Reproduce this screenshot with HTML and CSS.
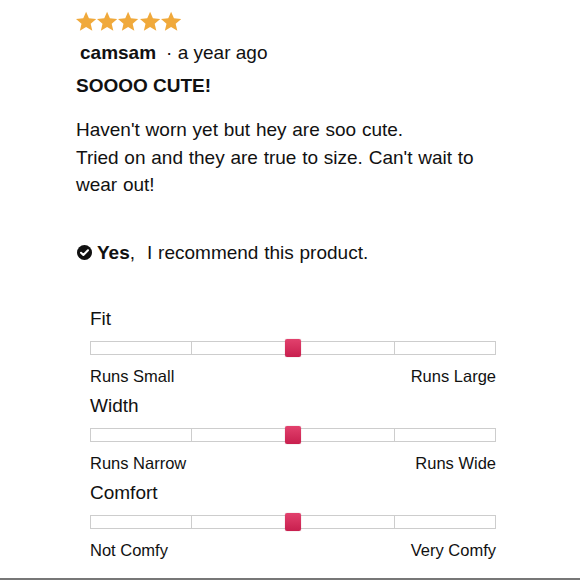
FILE: index.html
```
<!DOCTYPE html>
<html>
<head>
<meta charset="utf-8">
<link rel="stylesheet" href="styles.css">
</head>
<body>
<div class="review">
  <div class="stars">
    <svg class="star" viewBox="2 2 20 19"><path d="M12 17.27L18.18 21l-1.64-7.03L22 9.24l-7.19-.61L12 2 9.19 8.63 2 9.24l5.46 4.73L5.82 21z"/></svg>
    <svg class="star" viewBox="2 2 20 19"><path d="M12 17.27L18.18 21l-1.64-7.03L22 9.24l-7.19-.61L12 2 9.19 8.63 2 9.24l5.46 4.73L5.82 21z"/></svg>
    <svg class="star" viewBox="2 2 20 19"><path d="M12 17.27L18.18 21l-1.64-7.03L22 9.24l-7.19-.61L12 2 9.19 8.63 2 9.24l5.46 4.73L5.82 21z"/></svg>
    <svg class="star" viewBox="2 2 20 19"><path d="M12 17.27L18.18 21l-1.64-7.03L22 9.24l-7.19-.61L12 2 9.19 8.63 2 9.24l5.46 4.73L5.82 21z"/></svg>
    <svg class="star" viewBox="2 2 20 19"><path d="M12 17.27L18.18 21l-1.64-7.03L22 9.24l-7.19-.61L12 2 9.19 8.63 2 9.24l5.46 4.73L5.82 21z"/></svg>
  </div>
  <div class="meta"><span class="author">camsam</span><span class="date">· a year ago</span></div>
  <div class="title">SOOOO CUTE!</div>
  <p class="body">Haven't worn yet but hey are soo cute.<br>Tried on and they are true to size. Can't wait to wear out!</p>
  <div class="recommend">
    <svg class="check" viewBox="0 0 16 16"><circle cx="8" cy="8" r="8" fill="#111"/><path d="M4.3 8.3l2.5 2.4 4.9-5" fill="none" stroke="#fff" stroke-width="2.2" stroke-linecap="round" stroke-linejoin="round"/></svg>
    <span class="yes">Yes</span><span class="comma">,</span><span class="rec-text">I recommend this product.</span>
  </div>
  <div class="sliders">
    <div class="slider">
      <div class="slider-title">Fit</div>
      <div class="bar"><div class="seg"></div><div class="seg"></div><div class="seg"></div><div class="seg"></div><div class="thumb"></div></div>
      <div class="ends"><span>Runs Small</span><span>Runs Large</span></div>
    </div>
    <div class="slider">
      <div class="slider-title">Width</div>
      <div class="bar"><div class="seg"></div><div class="seg"></div><div class="seg"></div><div class="seg"></div><div class="thumb"></div></div>
      <div class="ends"><span>Runs Narrow</span><span>Runs Wide</span></div>
    </div>
    <div class="slider">
      <div class="slider-title">Comfort</div>
      <div class="bar"><div class="seg"></div><div class="seg"></div><div class="seg"></div><div class="seg"></div><div class="thumb"></div></div>
      <div class="ends"><span>Not Comfy</span><span>Very Comfy</span></div>
    </div>
  </div>
</div>
<div class="bottom-line"></div>
</body>
</html>
```
FILE: styles.css
```
html, body {
  margin: 0;
  padding: 0;
  background: #fff;
}
body {
  width: 580px;
  height: 580px;
  position: relative;
  overflow: hidden;
  font-family: "Liberation Sans", Arial, sans-serif;
  color: #111;
}
.review {
  padding: 11px 0 0 76px;
}
.stars {
  display: flex;
  gap: 1px;
  height: 21px;
}
.star {
  width: 20.2px;
  height: 20.5px;
  fill: #f0a93b;
}
.meta {
  margin-top: 10px;
  padding-left: 4px;
  font-size: 19px;
  line-height: 22px;
}
.author {
  font-weight: bold;
}
.date {
  margin-left: 10px;
}
.title {
  margin-top: 11px;
  font-size: 19px;
  line-height: 22px;
  font-weight: bold;
}
.body {
  margin: 19px 0 0;
  width: 420px;
  font-size: 19px;
  line-height: 27.5px;
  word-spacing: 0.5px;
}
.recommend {
  margin-top: 43px;
  display: flex;
  align-items: center;
  font-size: 19px;
  line-height: 22px;
}
.check {
  width: 15px;
  height: 15px;
  margin-left: 1px;
  margin-right: 5px;
}
.yes {
  font-weight: bold;
}
.rec-text {
  margin-left: 12px;
  word-spacing: 0.5px;
}
.sliders {
  margin-top: 45px;
  margin-left: 14px;
  width: 406px;
}
.slider {
  margin-bottom: 9.5px;
}
.slider-title {
  font-size: 19px;
  line-height: 20px;
}
.bar {
  position: relative;
  margin-top: 12.5px;
  height: 14px;
  display: flex;
  box-sizing: border-box;
  border: 1.5px solid #cdcdcd;
  background: #fff;
}
.seg {
  flex: 1;
  border-left: 1.5px solid #cdcdcd;
}
.seg:first-child {
  border-left: none;
}
.thumb {
  position: absolute;
  left: 194px;
  top: -3.5px;
  width: 16px;
  height: 18px;
  border-radius: 2px;
  background: linear-gradient(#e2416d, #c81f4e);
  box-shadow: 0 0 1px rgba(120, 0, 30, 0.5);
}
.ends {
  margin-top: 11px;
  display: flex;
  justify-content: space-between;
  font-size: 16.5px;
  line-height: 20px;
}
.bottom-line {
  position: absolute;
  left: 0;
  right: 0;
  bottom: 0;
  height: 2px;
  background: #777;
}
```
